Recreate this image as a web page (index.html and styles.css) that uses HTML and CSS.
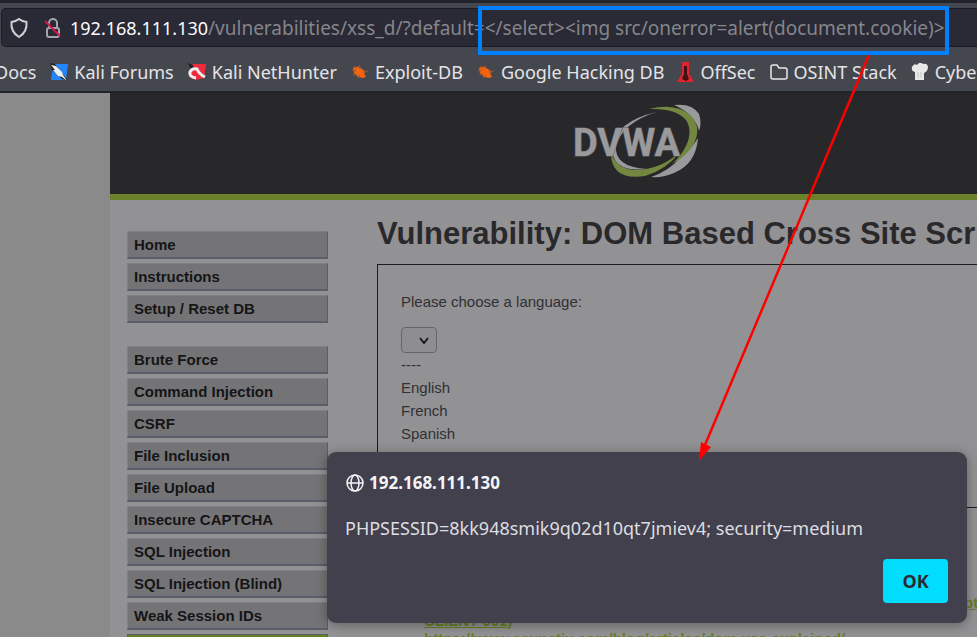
FILE: index.html
```
<!DOCTYPE html>
<html lang="en">

<head>
    <meta charset="UTF-8">
    <meta name="viewport" content="width=device-width, initial-scale=1.0">
    <title>Vulnerability: DOM Based Cross Site Scripting (XSS)</title>
    <link rel="stylesheet" href="styles.css">
</head>

<body>
    <header class="browser">
        <div class="url-bar">
            <svg class="shield" width="20" height="22" viewBox="0 0 20 22"><path d="M10 2 Q13 4.500 17.500 5 Q18.500 15 10 20 Q1.500 15 2.500 5 Q7 4.500 10 2Z"/></svg>
            <svg class="lock" width="20" height="22" viewBox="0 0 20 22"><path d="M6 10V6a4 4 0 0 1 8 0v4M4 13q0-2 2-2h8q2 0 2 2v5q0 2-2 2H6q-2 0-2-2z"/><path class="slash" d="M2 4l15 15"/></svg>
            <span class="host">192.168.111.130</span>
            <input class="url" type="text" aria-label="Address" spellcheck="false" value="/vulnerabilities/xss_d/?default=&lt;/select&gt;&lt;img src/onerror=alert(document.cookie)&gt;">
        </div>
        <nav class="bookmarks">
            <a href="#">Docs</a>
            <a href="#"><svg width="18" height="18" viewBox="0 0 18 18"><path fill="#2586fa" d="M3 1h15l-2 16H1z"/><path fill="#222" d="M0 0l5 1 13 17-6-2L2 7z"/><path fill="#eee" d="M1 2l5 1 6 6 1 3 4 6-5-4-4-1-5-6 2 0z"/></svg>Kali Forums</a>
            <a href="#"><svg width="18" height="18" viewBox="0 0 18 18"><path fill="#ee2b3d" d="M4 1h14l-2 14-8 2-7-3z"/><path fill="#222" d="M0 0l5 2 1 4-4-1z"/><path fill="none" stroke="#eee" stroke-width="3" d="M8 15Q1 14 2 9q2-4 7-3 2 5 8 8"/></svg>Kali NetHunter</a>
            <a href="#"><svg width="18" height="18" viewBox="0 0 18 18"><path fill="#f26411" d="M2 5q5-3 9 1l4 3-2 1 2 4-3 1-5-1-4-4z"/><path fill="none" stroke="#a0562d" d="M1 7l4 1M3 3l3 3M8 2l1 4M2 12l4-1M6 15l3-3M12 9l5-1"/></svg>Exploit-DB</a>
            <a href="#"><svg width="18" height="18" viewBox="0 0 18 18"><path fill="#f26411" d="M2 5q5-3 9 1l4 3-2 1 2 4-3 1-5-1-4-4z"/><path fill="none" stroke="#a0562d" d="M1 7l4 1M3 3l3 3M8 2l1 4M2 12l4-1M6 15l3-3M12 9l5-1"/></svg>Google Hacking DB</a>
            <a href="#"><svg width="16" height="20" viewBox="0 0 16 20"><path fill="#e0242e" d="M4 0h7v12l4 6v2H0v-2l4-6z"/><path fill="#401014" d="M6 4h3v8l2 5-3 2-4-2 2-5z"/></svg>OffSec</a>
            <a href="#"><svg width="18" height="18" viewBox="0 0 18 18"><path fill="none" stroke="#e8e8ec" stroke-width="1.500" d="M1 4q0-2 2-2h4l2 3h6q2 0 2 2v7q0 2-2 2H3q-2 0-2-2z"/></svg>OSINT Stack</a>
            <a href="#"><svg width="18" height="18" viewBox="0 0 18 18"><path fill="#e8e8e8" d="M4 9Q0 8 1 4q2-4 5-2 3-4 6-1 5-1 5 4-1 4-4 5v7H4z"/><path stroke="#c4c4c4" d="M7 9v6M10 9v6"/></svg>CyberChef</a>
        </nav>
    </header>

    <div class="viewport">
        <div class="page">
            <div class="banner">
                <svg class="logo" width="130" height="80" viewBox="0 0 130 80">
                    <path fill="#9a9a9c" d="M101 3Q119 1 126 12Q129 21 126 29Q122 12 101 3Z"/>
                    <path fill="#9a9a9c" d="M125 36Q123 62 101 71Q90 76 78 75Q96 69 108 55Q118 47 125 36Z"/>
                    <path fill="#9a9a9c" d="M84 10Q50 20 43 44Q41 65 74 67Q39 71 39 46Q43 19 84 10Z"/>
                    <path fill="#738741" d="M76 7Q105 0 119 15Q129 27 120 43Q114 54 99 62Q108 54 113 44Q120 29 113 18Q103 6 76 7Z"/>
                    <path fill="#738741" d="M38 51Q44 68 64 68Q88 67 107 50Q93 68 72 74Q38 79 38 51Z"/>
                    <text x="0" y="54">DVWA</text>
                </svg>
            </div>
            <div class="columns">
                <nav class="menu">
                    <ul>
                        <li><a href="#">Home</a></li>
                        <li><a href="#">Instructions</a></li>
                        <li><a href="#">Setup / Reset DB</a></li>
                    </ul>
                    <ul>
                        <li><a href="#">Brute Force</a></li>
                        <li><a href="#">Command Injection</a></li>
                        <li><a href="#">CSRF</a></li>
                        <li><a href="#">File Inclusion</a></li>
                        <li><a href="#">File Upload</a></li>
                        <li><a href="#">Insecure CAPTCHA</a></li>
                        <li><a href="#">SQL Injection</a></li>
                        <li><a href="#">SQL Injection (Blind)</a></li>
                        <li><a href="#">Weak Session IDs</a></li>
                        <li><a class="selected" href="#">XSS (DOM)</a></li>
                    </ul>
                </nav>
                <main class="content">
                    <h1>Vulnerability: DOM Based Cross Site Scripting (XSS)</h1>
                    <form class="vulnerable">
                        <label for="language">Please choose a language:</label>
                        <div class="select">
                            <select id="language"></select>
                            <svg width="12" height="8" viewBox="0 0 12 8"><path d="M2 1l4 5 4-5"/></svg>
                        </div>
                        <div>----</div>
                        <div>English</div>
                        <div>French</div>
                        <div>Spanish</div>
                    </form>
                    <h2>More Information</h2>
                    <ul class="links">
                        <li><a href="#">https://www.owasp.org/index.php/Cross-site_Scripting_(XSS)</a></li>
                        <li><a href="#">https://www.owasp.org/index.php/Testing_for_DOM-Based_Cross_Site_Scripting_(OTG-<br>CLIENT-001)</a></li>
                        <li><a href="#">https://www.acunetix.com/blog/articles/dom-xss-explained/</a></li>
                    </ul>
                </main>
            </div>
        </div>
    </div>

    <div class="alert" role="alertdialog" aria-labelledby="alertTitle">
        <h3 id="alertTitle"><svg width="20" height="20" viewBox="0 0 20 20"><circle cx="10" cy="10" r="8"/><ellipse cx="10" cy="10" rx="4" ry="8"/><path d="M2 10h16"/></svg>192.168.111.130</h3>
        <p>PHPSESSID=8kk948smik9q02d10qt7jmiev4; security=medium</p>
        <button type="button">OK</button>
    </div>

    <div class="highlight"></div>
    <svg class="arrow" width="180" height="410" viewBox="0 0 180 410"><path class="line" d="M173 1L9 391"/><path class="head" d="M3 407L5 388L15 393Z"/></svg>
</body>

</html>
```
FILE: styles.css
```
* {
    box-sizing: border-box;
}

body {
    display: flex;
    flex-direction: column;
    height: 100vh;
    margin: 0;
    overflow: hidden;
    position: relative;
    background-color: #8a8a8b;
    font-family: "Liberation Sans", Arial, sans-serif;
}

/* Browser bars */

.browser {
    flex: none;
    border-top: 3px solid #22232c;
    border-bottom: 2px solid #232429;
    background-color: #45474e;
    font-family: "Noto Sans", sans-serif;
    color: #e4e4e8;
}

.url-bar {
    display: flex;
    align-items: center;
    height: 39px;
    margin: 5px 0 0 1px;
    padding-left: 7px;
    border: 1px solid #1b1c22;
    border-right: none;
    border-radius: 5px 0 0 5px;
    background-color: #292a35;
}

.url-bar svg {
    flex: none;
    fill: none;
    stroke: #d0d0d4;
    stroke-width: 2;
}

.url-bar .lock {
    margin: 0 7px 0 14px;
    stroke: #a4a4aa;
}

.url-bar .slash {
    stroke: #d4184a;
}

.host {
    font-size: 18px;
    color: #fbfbfe;
}

.url {
    flex: 1;
    min-width: 0;
    padding: 0;
    border: none;
    outline: none;
    background: none;
    font-family: inherit;
    font-size: 19px;
    color: #85868b;
}

.bookmarks {
    display: flex;
    align-items: center;
    gap: 14px;
    height: 44px;
    margin-left: -5px;
    padding-top: 5px;
    overflow: hidden;
}

.bookmarks a {
    display: flex;
    flex: none;
    align-items: center;
    gap: 6px;
    font-size: 18px;
    color: inherit;
    text-decoration: none;
}

/* DVWA page */

.viewport {
    flex: 1;
    min-height: 0;
    overflow: hidden;
    padding-left: 110px;
}

.page {
    width: 1120px;
    background-color: #929294;
}

.banner {
    height: 107px;
    padding-top: 9px;
    border-bottom: 6px solid #6b822b;
    background-color: #28282a;
    text-align: center;
}

.logo {
    margin-right: 64px;
}

.logo text {
    fill: #9a9a9c;
    stroke: #626266;
    stroke-width: 1;
    paint-order: stroke;
    font-family: Roboto, sans-serif;
    font-size: 38px;
    font-weight: bold;
}

.columns {
    display: flex;
    gap: 49px;
    padding: 0 60px 0 17px;
}

.menu {
    flex: none;
    width: 201px;
    padding-top: 31px;
}

.menu ul {
    margin: 0 0 23px;
    padding: 0;
    list-style: none;
}

.menu li {
    margin-bottom: 4px;
}

.menu li:last-child {
    margin-bottom: 0;
}

.menu a {
    display: block;
    height: 28px;
    padding-left: 6px;
    border: 1px solid #808083;
    border-right-color: #5a5e6b;
    border-bottom: 2px solid #5a5e6b;
    background-color: #747476;
    font-size: 15px;
    font-weight: bold;
    line-height: 26px;
    color: #151517;
    text-decoration: none;
}

.menu .selected {
    border-color: #5a5e6b;
    background-color: #658023;
}

.content {
    flex: 1;
    font-size: 15px;
    line-height: 23px;
    color: #303034;
}

.content h1 {
    margin: 16px 0 12px;
    font-size: 31px;
    line-height: 36px;
    color: #29292c;
    white-space: nowrap;
}

.vulnerable {
    height: 244px;
    padding: 25px 23px;
    border: 1px solid #1c1c1e;
}

.select {
    position: relative;
    width: 36px;
    height: 26px;
    margin: 14px 0 0;
}

.select select {
    display: block;
    width: 36px;
    height: 26px;
    border: 1px solid #65656f;
    border-radius: 4px;
    appearance: none;
    background-color: #8d8d92;
}

.select svg {
    position: absolute;
    top: 10px;
    right: 7px;
    fill: none;
    stroke: #18181c;
    stroke-width: 2;
    pointer-events: none;
}

.content h2 {
    margin: 24px 0 18px;
    font-size: 22px;
    line-height: 26px;
}

.links {
    margin: 0;
    padding-left: 47px;
    line-height: 18px;
}

.links a {
    font-weight: bold;
    color: #658023;
}

/* Alert */

.alert {
    position: absolute;
    top: 452px;
    right: 10px;
    width: 640px;
    height: 171px;
    padding: 18px 19px 0 18px;
    border-radius: 9px;
    background-color: #42404c;
    box-shadow: 0 2px 12px rgba(0, 0, 0, 0.35);
    font-family: "Noto Sans", sans-serif;
    color: #f4f4f7;
}

.alert h3 {
    display: flex;
    align-items: center;
    gap: 4px;
    margin: 0 0 19px;
    font-size: 17px;
    line-height: 26px;
}

.alert h3 svg {
    fill: none;
    stroke: #f4f4f7;
    stroke-width: 1.5;
}

.alert p {
    margin: 0;
    font-size: 18px;
    line-height: 26px;
    color: #dddde2;
}

.alert button {
    display: block;
    width: 65px;
    height: 44px;
    margin: 18px 0 0 auto;
    border: none;
    border-radius: 4px;
    background-color: #00ddff;
    font-family: inherit;
    font-size: 18px;
    font-weight: bold;
    color: #2b2a33;
}

/* Marks drawn over the page */

.highlight {
    position: absolute;
    top: 6px;
    left: 478px;
    width: 471px;
    height: 49px;
    border: 4px solid #0080ff;
    pointer-events: none;
}

.arrow {
    position: absolute;
    top: 54px;
    left: 696px;
    pointer-events: none;
}

.arrow .line {
    stroke: #ff0000;
    stroke-width: 2.5;
}

.arrow .head {
    fill: #ff0000;
}
```
